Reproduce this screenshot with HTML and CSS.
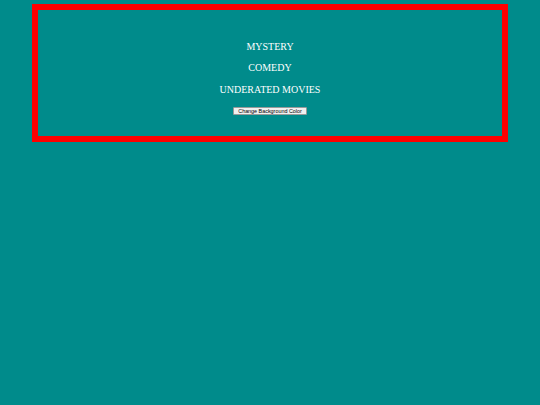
FILE: index.html
```html
<!DOCTYPE html>
<html>
<head>
<meta charset="utf-8">
<link rel="stylesheet" href="styles.css">
</head>
<body>
<div class="box">
  <p class="item">MYSTERY</p>
  <p class="item">COMEDY</p>
  <p class="item">UNDERATED MOVIES</p>
  <button class="btn">Change Background Color</button>
</div>
</body>
</html>
```
FILE: styles.css
```css
html, body {
  margin: 0;
  padding: 0;
  background: #008b8b;
}
body {
  padding-top: 4px;
}
.box {
  box-sizing: border-box;
  width: 476px;
  height: 138px;
  margin: 0 auto;
  border: 6px solid #ff0000;
  display: flex;
  flex-direction: column;
  align-items: center;
  padding-top: 30.5px;
}
.item {
  margin: 0 0 9.5px 0;
  font-family: "Liberation Serif", "Times New Roman", serif;
  font-size: 10px;
  line-height: 12px;
  color: #ffffff;
}
.item:nth-of-type(3) {
  margin-bottom: 11px;
}
.btn {
  font-family: "Liberation Sans", Arial, sans-serif;
  font-size: 5.4px;
  line-height: 7px;
  height: 8px;
  padding: 0 4px;
  margin: 0;
  background: #f0f0f0;
  color: #000;
  border: 0.5px solid #9a9a9a;
  border-radius: 1px;
}
```
